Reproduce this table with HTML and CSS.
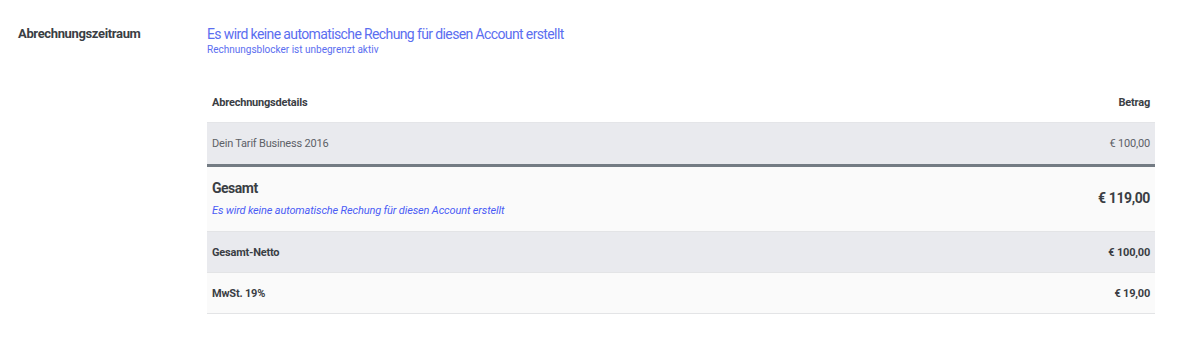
FILE: index.html
```html
<!DOCTYPE html>
<html lang="de">
<head>
    <meta charset="UTF-8">
    <title>Abrechnung</title>
    <link rel="stylesheet" href="styles.css">
</head>
<body>

    <!-- Billing period section -->
    <div class="billing">
        <div class="billing-label">Abrechnungszeitraum</div>

        <div class="billing-main">
            <div class="notice">
                <div class="notice-title">Es wird keine automatische Rechung für diesen Account erstellt</div>
                <div class="notice-sub">Rechnungsblocker ist unbegrenzt aktiv</div>
            </div>

            <!-- Invoice details -->
            <div class="details">
                <div class="row head">
                    <span>Abrechnungsdetails</span>
                    <span>Betrag</span>
                </div>
                <div class="row item">
                    <span>Dein Tarif Business 2016</span>
                    <span>€ 100,00</span>
                </div>
                <div class="row total">
                    <div>
                        <div class="total-title">Gesamt</div>
                        <div class="total-note">Es wird keine automatische Rechung für diesen Account erstellt</div>
                    </div>
                    <span class="total-sum">€ 119,00</span>
                </div>
                <div class="row sum dark">
                    <span>Gesamt-Netto</span>
                    <span>€ 100,00</span>
                </div>
                <div class="row sum">
                    <span>MwSt. 19%</span>
                    <span>€ 19,00</span>
                </div>
            </div>
        </div>
    </div>

</body>
</html>
```

FILE: styles.css
```css
/* Basic reset */
* {
    margin: 0;
    padding: 0;
    box-sizing: border-box;
}

body {
    background: #ffffff;
    font-family: Roboto, "Liberation Sans", sans-serif;
    color: #3c4046;
}

.billing {
    display: flex;
    padding: 25px 45px 0 18px;
}

.billing-label {
    width: 189px;
    font-size: 13px;
    font-weight: 700;
    letter-spacing: -0.35px;
    color: #3a3e44;
    padding-top: 1px;
}

.billing-main {
    flex: 1;
}

/* Blue notice above the table */
.notice {
    color: #5b6ef0;
    margin-bottom: 26px;
}

.notice-title {
    font-size: 14px;
    letter-spacing: -0.62px;
    line-height: 18px;
}

.notice-sub {
    font-size: 10px;
    line-height: 14px;
}

/* Table rows */
.row {
    display: flex;
    justify-content: space-between;
    align-items: center;
    padding: 0 5px;
    font-size: 11px;
    letter-spacing: -0.2px;
}

.head {
    height: 40px;
    font-weight: 700;
    color: #3a3e44;
    border-bottom: 1px solid #e4e5e8;
}

.item {
    height: 44px;
    background: #e9eaee;
    color: #5d6167;
    border-bottom: 3px solid #737b83;
}

.total {
    height: 65px;
    padding-bottom: 2px;
    background: #fafafa;
    border-bottom: 1px solid #e3e4e6;
}

.total-title {
    font-size: 14px;
    line-height: 16px;
    font-weight: 700;
    letter-spacing: -0.5px;
    color: #3a3e44;
    margin-bottom: 8px;
}

.total-note {
    font-size: 11px;
    line-height: 13px;
    font-style: italic;
    letter-spacing: -0.15px;
    color: #4a5cf5;
}

.total-sum {
    font-size: 14px;
    font-weight: 700;
    letter-spacing: -0.4px;
    color: #3a3e44;
}

.sum {
    height: 41px;
    background: #fafafa;
    font-weight: 700;
    color: #3a3e44;
    border-bottom: 1px solid #e3e4e6;
}

.sum.dark {
    background: #e9eaee;
}
```
